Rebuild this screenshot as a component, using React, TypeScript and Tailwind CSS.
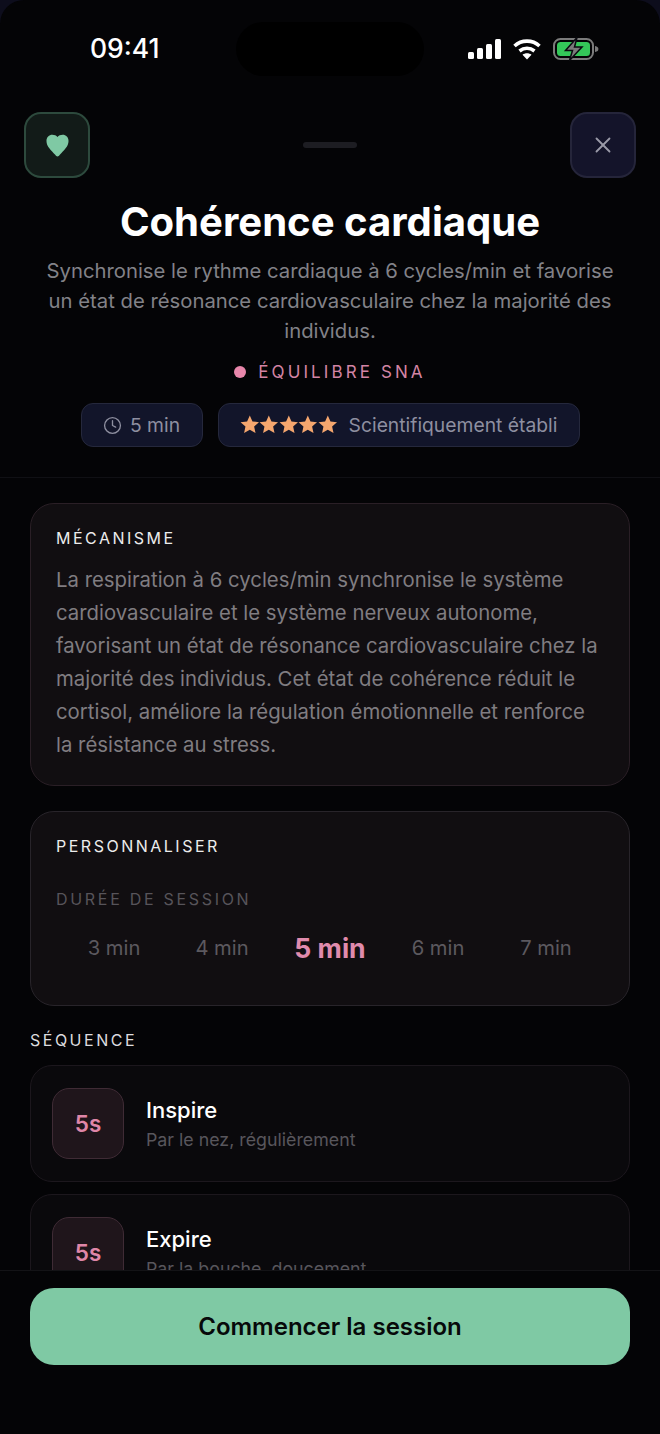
import { Clock, X } from "lucide-react";

const DURATIONS = ["3 min", "4 min", "5 min", "6 min", "7 min"];

const STEPS = [
  { time: "5s", title: "Inspire", hint: "Par le nez, régulièrement" },
  { time: "5s", title: "Expire", hint: "Par la bouche, doucement" },
];

function StatusIcons() {
  return (
    <div className="flex items-center">
      <svg width="33" height="22" viewBox="0 0 33 22" fill="#fff">
        <rect x="0" y="14" width="6" height="7" rx="1.5" />
        <rect x="9" y="10" width="6" height="11" rx="1.5" />
        <rect x="18" y="6" width="6" height="15" rx="1.5" />
        <rect x="27" y="1" width="6" height="20" rx="1.5" />
      </svg>
      <svg className="ml-[12px]" width="28" height="22" viewBox="0 0 28 22" fill="none" stroke="#fff" strokeWidth="3.6">
        <path d="M1.5 8 C8.5 1.5 19.5 1.5 26.5 8" />
        <path d="M6.5 13 C11 9.5 17 9.5 21.5 13" />
        <path d="M14 21.5 L9.5 16.8 C12 14.8 16 14.8 18.5 16.8 Z" fill="#fff" stroke="none" />
      </svg>
      <svg className="ml-[12px]" width="46" height="24" viewBox="0 0 46 24" fill="none">
        <rect x="1" y="2" width="39" height="20" rx="6.5" stroke="#7b7b7b" strokeWidth="2" />
        <rect x="4" y="5" width="33" height="14" rx="3.5" fill="#34c759" />
        <path d="M42 9 C44.6 9.5 45.4 10.5 45.4 12 C45.4 13.5 44.6 14.5 42 15 Z" fill="#7b7b7b" />
        <path d="M24 0.5 L12.5 13.5 H19.5 L16.5 23.5 L29 10 H21.5 Z" fill="#7b7b7b" stroke="#0a0a10" strokeWidth="1.5" />
      </svg>
    </div>
  );
}

function Star() {
  return (
    <svg width="19.6" height="19.6" viewBox="0 0 24 24" fill="#f4a66e">
      <path d="M12 0.5l3.3 7.4 8 .9-6 5.4 1.7 7.9L12 18.2l-7 4 1.7-8-6-5.4 8-.9z" />
    </svg>
  );
}

export default function App() {
  return (
    <div className="h-[1434px] w-[660px] overflow-hidden bg-[#0d0d1c] font-['Inter',sans-serif]">
      <div className="flex h-full flex-col rounded-t-[24px] bg-[#040406]">
        <div className="min-h-0 flex-1 overflow-hidden">
          {/* Status bar */}
          <div className="flex h-[112px] items-start pl-[90px]">
            <span className="mt-[30px] w-[146px] text-[26.5px] leading-[36px] font-medium text-white">09:41</span>
            <div className="mt-[22px] h-[54px] w-[188px] rounded-[27px] bg-black" />
            <div className="mt-[37px] ml-[44px]">
              <StatusIcons />
            </div>
          </div>

          {/* Header */}
          <div className="flex items-center justify-between px-[24px]">
            <button className="flex h-[66px] w-[66px] items-center justify-center rounded-[17px] border-2 border-[#2d4a3d] bg-[#121b18]">
              <svg width="23" height="23" viewBox="0 0 24 24" fill="#7fc9a4">
                <path d="M12 23.5 C11 23.5 10.4 22.6 9.6 21.7 C5.5 17 0.5 13 0.5 7.2 C0.5 3.4 3.2 0.8 6.6 0.8 C8.8 0.8 10.8 1.6 12 3 C13.2 1.6 15.2 0.8 17.4 0.8 C20.8 0.8 23.5 3.4 23.5 7.2 C23.5 13 18.5 17 14.4 21.7 C13.6 22.6 13 23.5 12 23.5 Z" />
              </svg>
            </button>
            <div className="h-[6px] w-[54px] rounded-full bg-[#1d1d22]" />
            <button className="flex h-[66px] w-[66px] items-center justify-center rounded-[17px] border-2 border-[#25253a] bg-[#14142a]">
              <X size={26} strokeWidth={1.7} className="text-[#9a9aa8]" />
            </button>
          </div>

          {/* Title block */}
          <div className="flex flex-col items-center px-[30px]">
            <h1 className="mt-[16px] text-[40.1px] leading-[56px] font-bold text-white">
              Cohérence cardiaque
            </h1>
            <p className="mt-[6px] w-[582px] text-center text-[20.3px] leading-[30px] text-[#828288]">
              Synchronise le rythme cardiaque à 6 cycles/min et favorise un état de résonance cardiovasculaire chez la majorité des individus.
            </p>
            <div className="mt-[13px] flex items-center gap-[12px]">
              <span className="h-[12px] w-[12px] rounded-full bg-[#e887ab]" />
              <span className="text-[17px] leading-[26px] tracking-[3.1px] text-[#d384a4]">ÉQUILIBRE SNA</span>
            </div>
            <div className="mt-[18px] flex gap-[15px]">
              <div className="flex h-[44px] w-[122px] items-center justify-center gap-[8px] rounded-[12px] border border-[#25283c] bg-[#12152a] text-[19.3px] text-[#8e8fa0]">
                <Clock size={19} strokeWidth={1.7} />
                <span>5 min</span>
              </div>
              <div className="flex h-[44px] w-[362px] items-center justify-center gap-[11px] rounded-[12px] border border-[#25283c] bg-[#12152a] text-[19.3px] text-[#8e8fa0]">
                <div className="flex">
                  <Star />
                  <Star />
                  <Star />
                  <Star />
                  <Star />
                </div>
                <span>Scientifiquement établi</span>
              </div>
            </div>
          </div>

          <div className="mt-[30px] h-px bg-[#101014]" />

          <div className="flex flex-col px-[30px]">
            {/* Mécanisme */}
            <section className="mt-[25px] h-[283px] rounded-[24px] border border-[#2a1f26] bg-[#110e11] px-[25px] pt-[23px]">
              <h2 className="text-[16px] leading-[22px] tracking-[2.5px] text-[#ececec]">MÉCANISME</h2>
              <p className="mt-[14px] text-[20.35px] leading-[33px] text-[#807d81]">
                La respiration à 6 cycles/min synchronise le système cardiovasculaire et le système nerveux autonome, favorisant un état de résonance cardiovasculaire chez la majorité des individus. Cet état de cohérence réduit le cortisol, améliore la régulation émotionnelle et renforce la résistance au stress.
              </p>
            </section>

            {/* Personnaliser */}
            <section className="mt-[25px] h-[195px] rounded-[24px] border border-[#28242a] bg-[#110e11] px-[25px] pt-[23px]">
              <h2 className="text-[16px] leading-[22px] tracking-[2.5px] text-[#ececec]">PERSONNALISER</h2>
              <div className="mt-[31px] text-[16px] leading-[22px] tracking-[2.7px] text-[#57545a]">DURÉE DE SESSION</div>
              <div className="mx-[4px] mt-[20px] grid grid-cols-5 items-center">
                {DURATIONS.map((d) => (
                  <span
                    key={d}
                    className={
                      d === "5 min"
                        ? "text-center text-[26.6px] leading-[36px] font-bold text-[#e08bad]"
                        : "text-center text-[20.2px] leading-[36px] text-[#5c595f]"
                    }
                  >
                    {d}
                  </span>
                ))}
              </div>
            </section>

            {/* Séquence */}
            <h2 className="mt-[23px] text-[16px] leading-[22px] tracking-[2.5px] text-[#dcdcde]">SÉQUENCE</h2>
            <div className="mt-[14px] flex flex-col gap-[12px]">
              {STEPS.map((s) => (
                <div key={s.title} className="flex h-[117px] items-start gap-[22px] rounded-[22px] border border-[#1c171d] bg-[#0a090c] pt-[22px] pl-[21px]">
                  <div className="flex h-[71px] w-[72px] items-center justify-center rounded-[17px] border border-[#3f2b35] bg-[#1f151b] pt-[1px] text-[22.5px] font-semibold text-[#df86a8]">
                    {s.time}
                  </div>
                  <div>
                    <div className="mt-[6px] text-[22px] leading-[32px] font-medium text-white">{s.title}</div>
                    <div className="mt-[1px] text-[17.8px] leading-[26px] text-[#58565c]">{s.hint}</div>
                  </div>
                </div>
              ))}
            </div>
          </div>
        </div>

        {/* Footer */}
        <div className="h-[164px] shrink-0 border-t border-[#131316] bg-[#040406] px-[30px] pt-[17px]">
          <button className="flex h-[77px] w-full items-center justify-center rounded-[24px] bg-[#7fc9a4] text-[24px] font-semibold text-[#07090a]">
            Commencer la session
          </button>
        </div>
      </div>
    </div>
  );
}
